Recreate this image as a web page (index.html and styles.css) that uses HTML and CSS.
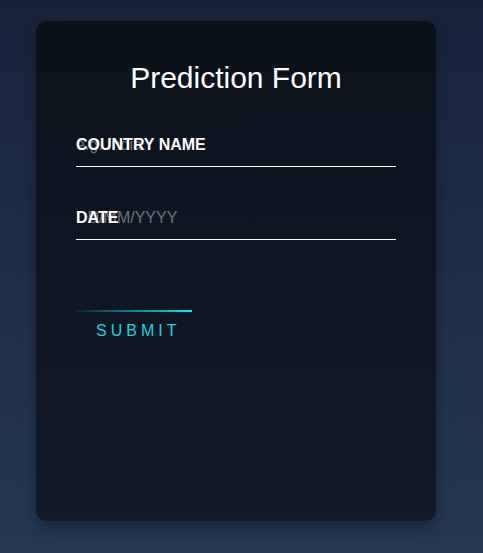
FILE: index.html
```html
<!DOCTYPE html>
<html>
<head>
<meta charset="utf-8">
<link rel="stylesheet" href="styles.css">
</head>
<body>
<div class="card">
  <h2 class="title">Prediction Form</h2>
  <form class="form">
    <div class="field field-first">
      <input class="field-input" type="text" placeholder="e.g. India">
      <label class="field-label">COUNTRY NAME</label>
    </div>
    <div class="field">
      <input class="field-input" type="text" placeholder="DD/MM/YYYY">
      <label class="field-label">DATE</label>
    </div>
    <a class="submit" href="#"><span class="submit-line"></span>SUBMIT</a>
  </form>
</div>
</body>
</html>
```
FILE: styles.css
```css
html, body {
  margin: 0;
  padding: 0;
}
body {
  min-height: 553px;
  background: linear-gradient(180deg, #18233a 0%, #243952 100%);
  font-family: "Liberation Sans", Arial, sans-serif;
  overflow: hidden;
}
.card {
  box-sizing: border-box;
  width: 400px;
  height: 500px;
  margin: 21px 0 0 36px;
  padding: 40px;
  border-radius: 10px;
  background: linear-gradient(180deg, #0b121c 0%, #111a26 100%);
  box-shadow: 0 8px 14px rgba(0, 0, 0, 0.3);
}
.title {
  margin: 0 0 33px;
  padding: 0;
  color: #fff;
  font-size: 30px;
  font-weight: normal;
  text-align: center;
  line-height: normal;
}
.form {
  display: flex;
  flex-direction: column;
  align-items: flex-start;
  margin: 0;
}
.field {
  position: relative;
  width: 100%;
  margin-bottom: 30px;
}
.field-first {
  margin-bottom: 34px;
}
.field-input {
  box-sizing: border-box;
  display: block;
  width: 100%;
  margin: 0;
  padding: 8px 0 12px;
  font-family: "Liberation Sans", Arial, sans-serif;
  font-size: 16px;
  color: #fff;
  border: none;
  border-bottom: 1px solid #fff;
  outline: none;
  background: transparent;
}
.field-input::placeholder {
  color: #6e7277;
}
.field-label {
  position: absolute;
  top: 0;
  left: 0;
  padding: 8px 0 12px;
  font-size: 16px;
  font-weight: bold;
  color: #fff;
  pointer-events: none;
  line-height: normal;
}
.submit {
  position: relative;
  display: inline-block;
  margin-top: 40px;
  padding: 12px 20px 8px;
  color: #1ed2e0;
  font-size: 16px;
  letter-spacing: 4px;
  text-decoration: none;
  overflow: hidden;
  line-height: normal;
}
.submit-line {
  position: absolute;
  top: 0;
  left: -8px;
  width: 124px;
  height: 2px;
  background: linear-gradient(90deg, transparent, #03e9f4);
}
```
